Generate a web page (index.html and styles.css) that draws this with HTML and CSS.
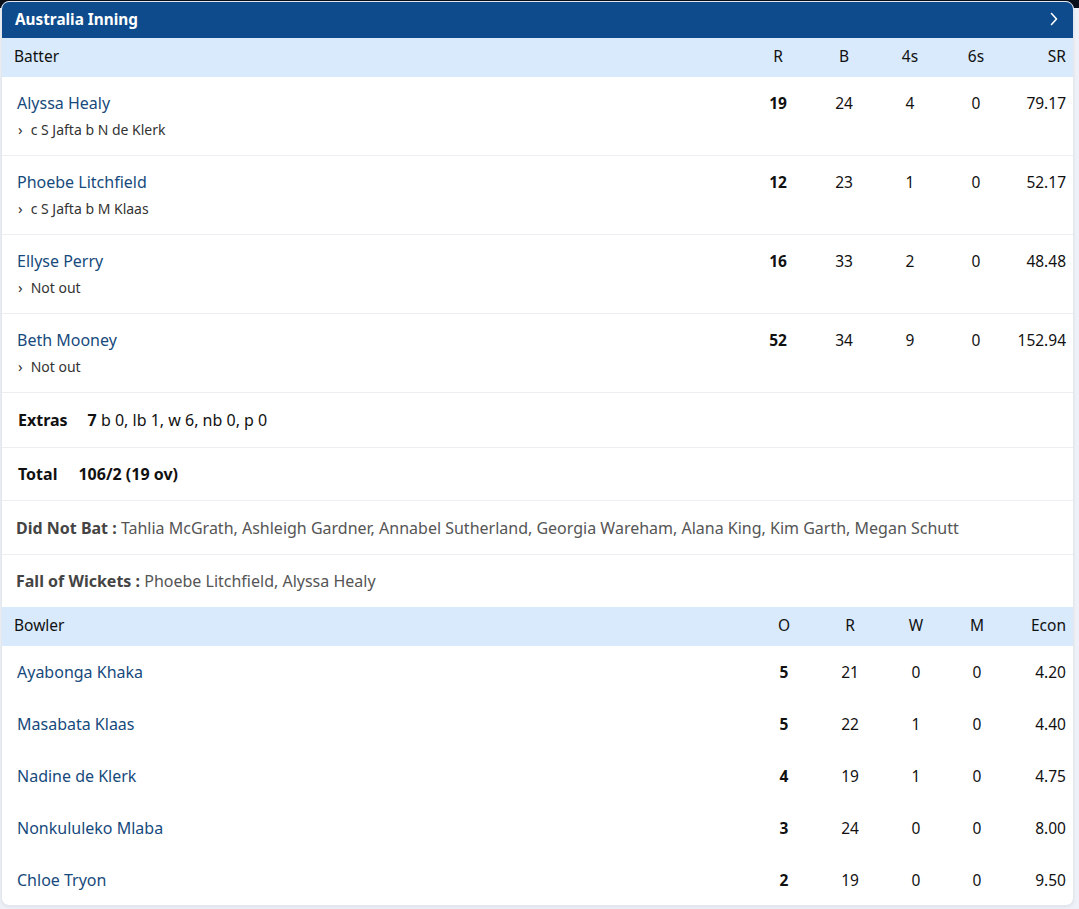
FILE: index.html
```html
<!DOCTYPE html>
<html lang="en">
<head>
<meta charset="utf-8">
<title>Australia Inning</title>
<link rel="stylesheet" href="styles.css">
</head>
<body>
<div class="card">
  <div class="title">
    <span>Australia Inning</span>
    <svg class="chev" width="10" height="14" viewBox="0 0 10 14"><path d="M2.5 1.5 L7.5 7 L2.5 12.5" fill="none" stroke="#fff" stroke-width="1.6" stroke-linecap="round" stroke-linejoin="round"/></svg>
  </div>

  <div class="bat head">
    <div class="lbl">Batter</div><div class="c">R</div><div class="c">B</div><div class="c">4s</div><div class="c">6s</div><div class="r">SR</div>
  </div>

  <div class="bat row">
    <div class="who"><div class="name">Alyssa Healy</div><div class="how"><span class="ar">›</span>c S Jafta b N de Klerk</div></div>
    <div class="c b">19</div><div class="c">24</div><div class="c">4</div><div class="c">0</div><div class="r">79.17</div>
  </div>
  <div class="bat row">
    <div class="who"><div class="name">Phoebe Litchfield</div><div class="how"><span class="ar">›</span>c S Jafta b M Klaas</div></div>
    <div class="c b">12</div><div class="c">23</div><div class="c">1</div><div class="c">0</div><div class="r">52.17</div>
  </div>
  <div class="bat row">
    <div class="who"><div class="name">Ellyse Perry</div><div class="how"><span class="ar">›</span>Not out</div></div>
    <div class="c b">16</div><div class="c">33</div><div class="c">2</div><div class="c">0</div><div class="r">48.48</div>
  </div>
  <div class="bat row">
    <div class="who"><div class="name">Beth Mooney</div><div class="how"><span class="ar">›</span>Not out</div></div>
    <div class="c b">52</div><div class="c">34</div><div class="c">9</div><div class="c">0</div><div class="r">152.94</div>
  </div>

  <div class="line extras"><b class="k">Extras</b><b>7</b>&nbsp;b 0, lb 1, w 6, nb 0, p 0</div>
  <div class="line total"><b class="k">Total</b><b>106/2 (19 ov)</b></div>
  <div class="line info"><b>Did Not Bat :</b>&nbsp;Tahlia McGrath, Ashleigh Gardner, Annabel Sutherland, Georgia Wareham, Alana King, Kim Garth, Megan Schutt</div>
  <div class="line info fow"><b>Fall of Wickets :</b>&nbsp;Phoebe Litchfield, Alyssa Healy</div>

  <div class="bowl head">
    <div class="lbl">Bowler</div><div class="c">O</div><div class="c">R</div><div class="c">W</div><div class="c">M</div><div class="r">Econ</div>
  </div>
  <div class="bowl row">
    <div class="name">Ayabonga Khaka</div><div class="c b">5</div><div class="c">21</div><div class="c">0</div><div class="c">0</div><div class="r">4.20</div>
  </div>
  <div class="bowl row">
    <div class="name">Masabata Klaas</div><div class="c b">5</div><div class="c">22</div><div class="c">1</div><div class="c">0</div><div class="r">4.40</div>
  </div>
  <div class="bowl row">
    <div class="name">Nadine de Klerk</div><div class="c b">4</div><div class="c">19</div><div class="c">1</div><div class="c">0</div><div class="r">4.75</div>
  </div>
  <div class="bowl row">
    <div class="name">Nonkululeko Mlaba</div><div class="c b">3</div><div class="c">24</div><div class="c">0</div><div class="c">0</div><div class="r">8.00</div>
  </div>
  <div class="bowl row last">
    <div class="name">Chloe Tryon</div><div class="c b">2</div><div class="c">19</div><div class="c">0</div><div class="c">0</div><div class="r">9.50</div>
  </div>
</div>
</body>
</html>
```

FILE: styles.css
```css
* { box-sizing: border-box; }
html, body { margin: 0; }
body {
  background: linear-gradient(#0a0f1c 0, #0a0f1c 8px, #eef1f7 8px);
  padding: 1px 5px 6px 1px;
  font-family: "Noto Sans", "Open Sans", sans-serif;
  font-size: 15px;
  color: #111;
}
.card {
  background: #fff;
  border: 1px solid #e4e7ee;
  border-radius: 8px;
  overflow: hidden;
  box-shadow: 0 1px 3px rgba(30, 40, 80, 0.08);
}
.title {
  background: #0d4b8c;
  color: #fff;
  height: 36px;
  display: flex;
  align-items: center;
  justify-content: space-between;
  padding: 0 14px 3px 13px;
  font-weight: 700;
  font-size: 15.3px;
}
.chev { display: block; }

.bat, .bowl {
  display: grid;
  align-items: center;
  padding: 0 7px 0 12px;
}
.bat { grid-template-columns: 1fr 66px 66px 66px 66px 57px; }
.bowl { grid-template-columns: 1fr 66px 66px 66px 56px 61px; }

.head {
  background: #d8eafc;
  height: 39px;
  padding-bottom: 3px;
  font-size: 15.5px;
  color: #111;
}
.c { text-align: center; }
.r { text-align: right; }
.b { font-weight: 700; }

.bat.row {
  height: 79px;
  align-items: start;
  padding-top: 14px;
  border-bottom: 1px solid #eceef2;
  font-size: 15.5px;
}
.bat.row > div { line-height: 24px; }
.who { padding-left: 3px; }
.name { color: #174a7c; font-size: 16px; }
.how { font-size: 14px; color: #333; margin-top: 4px; line-height: 20px !important; }
.ar { font-size: 15px; margin-left: 1px; margin-right: 8px; }

.line {
  display: flex;
  align-items: center;
  padding: 0 15px;
  border-bottom: 1px solid #eceef2;
  font-size: 16px;
}
.extras { height: 55px; padding-left: 16px; }
.extras .k { margin-right: 20px; }
.total { height: 53px; padding-left: 16px; }
.total .k { margin-right: 21px; }
.info { height: 54px; color: #555; font-size: 16px; padding-left: 14px; }
.info b { color: #444; }
.fow { height: 52px; border-bottom: none; }

.bowl.row {
  height: 52px;
  font-size: 15.5px;
}
.bowl.row.last { height: 51px; }
.bowl.row .name { padding-left: 3px; }
```
